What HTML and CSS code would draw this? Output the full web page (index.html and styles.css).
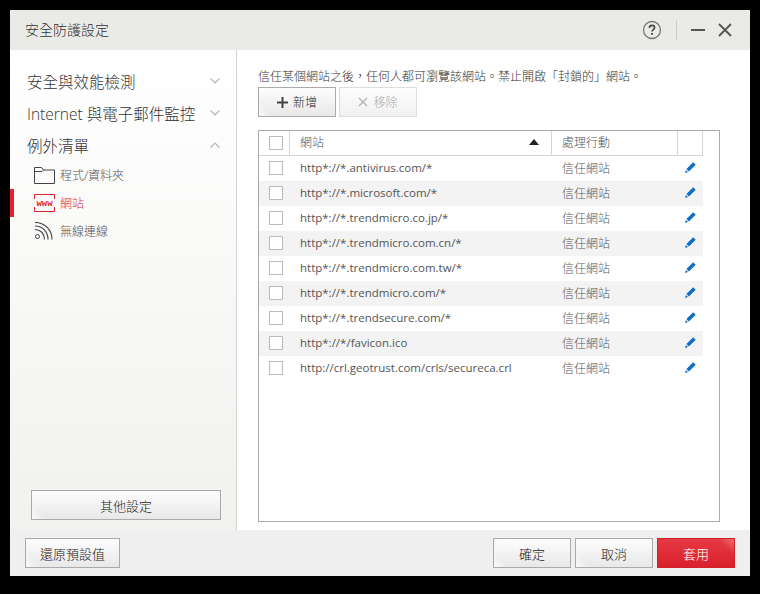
FILE: index.html
```html
<!DOCTYPE html>
<html lang="zh-Hant">
<head>
<meta charset="utf-8">
<title>安全防護設定</title>
<link rel="stylesheet" href="styles.css">
</head>
<body>
<div class="window">
  <header class="titlebar">
    <span class="title">安全防護設定</span>
    <div class="controls">
      <svg class="ic-help" width="20" height="20" viewBox="0 0 20 20"><circle cx="10" cy="10" r="8.5" fill="none" stroke="#777" stroke-width="1.3"/><path d="M7.4 8c0-1.6 1.1-2.6 2.6-2.6s2.600 1 2.600 2.300c0 1.900-2.600 1.900-2.600 3.800" fill="none" stroke="#444" stroke-width="1.6"/><rect x="9.1" y="13" width="1.8" height="1.8" fill="#444"/></svg>
      <span class="sep"></span>
      <svg class="ic-min" width="14" height="14" viewBox="0 0 14 14"><rect x="0" y="6" width="14" height="2" fill="#555"/></svg>
      <svg class="ic-close" width="14" height="14" viewBox="0 0 14 14"><path d="M1 1l12 12M13 1L1 13" stroke="#555" stroke-width="1.8" fill="none"/></svg>
    </div>
  </header>
  <div class="main">
    <aside class="sidebar">
      <nav class="nav">
        <div class="nav-head"><span>安全與效能檢測</span><svg class="chev" width="10" height="6" viewBox="0 0 10 6"><path d="M.5.5L5 5 9.500.5" fill="none" stroke="#b5b5b5" stroke-width="1.200"/></svg></div>
        <div class="nav-head"><span>Internet 與電子郵件監控</span><svg class="chev" width="10" height="6" viewBox="0 0 10 6"><path d="M.5.5L5 5 9.500.5" fill="none" stroke="#b5b5b5" stroke-width="1.200"/></svg></div>
        <div class="nav-head"><span>例外清單</span><svg class="chev" width="10" height="6" viewBox="0 0 10 6"><path d="M.5 5.500L5 1l4.500 4.500" fill="none" stroke="#b5b5b5" stroke-width="1.200"/></svg></div>
        <div class="nav-sub">
          <svg width="21" height="17" viewBox="0 0 21 17"><path d="M.5 16.500V.5h7l2 2.500h11v13.500zM.5 4.500h7.500l1.500-1.500" fill="none" stroke="#444"/></svg>
          <span>程式/資料夾</span>
        </div>
        <div class="nav-sub active">
          <svg width="21" height="18" viewBox="0 0 21 18"><path d="M.5 5V.5h20V5M.5 13v4.500h20V13" fill="none" stroke="#d9232e"/><text x="10.500" y="11.800" text-anchor="middle" class="www">www</text></svg>
          <span>網站</span>
        </div>
        <div class="nav-sub">
          <svg width="21" height="18" viewBox="0 0 21 18"><circle cx="3.500" cy="14.500" r="2" fill="none" stroke="#444"/><path d="M1 7.500c5.500 0 9.500 4 9.500 10M1 4c7.500 0 13 6 13 13.500M1 .5c10 0 17 7.500 17 17" fill="none" stroke="#444" stroke-width="1.100"/></svg>
          <span>無線連線</span>
        </div>
      </nav>
      <button class="btn btn-more">其他設定</button>
    </aside>
    <section class="content">
      <p class="desc">信任某個網站之後，任何人都可瀏覽該網站。禁止開啟「封鎖的」網站。</p>
      <div class="toolbar">
        <button class="btn btn-tool"><svg width="11" height="11" viewBox="0 0 11 11"><path d="M5.500 0v11M0 5.500h11" stroke="#444" stroke-width="2"/></svg>新增</button>
        <button class="btn btn-tool disabled"><svg width="10" height="10" viewBox="0 0 10 10"><path d="M1 1l8 8M9 1L1 9" stroke="#bbb" stroke-width="1.600"/></svg>移除</button>
      </div>
      <div class="tablebox">
        <div class="row head">
          <div class="c-check"><span class="cb"></span></div>
          <div class="c-site">網站<svg class="sort" width="10" height="6" viewBox="0 0 10 6"><path d="M0 6L5 0l5 6z" fill="#222"/></svg></div>
          <div class="c-act">處理行動</div>
          <div class="c-edit"></div>
        </div>
        <div class="row"><div class="c-check"><span class="cb"></span></div><div class="c-site">http*://*.antivirus.com/*</div><div class="c-act">信任網站</div><div class="c-edit"><svg class="pen" width="11" height="11" viewBox="0 0 11 11"><path d="M8.200.3l2.500 2.500-6.800 6.800-2.500-2.500zM1 8l2 2-3 1z" fill="#0f6fc6"/></svg></div></div>
        <div class="row"><div class="c-check"><span class="cb"></span></div><div class="c-site">http*://*.microsoft.com/*</div><div class="c-act">信任網站</div><div class="c-edit"><svg class="pen" width="11" height="11" viewBox="0 0 11 11"><path d="M8.200.3l2.500 2.500-6.800 6.800-2.500-2.500zM1 8l2 2-3 1z" fill="#0f6fc6"/></svg></div></div>
        <div class="row"><div class="c-check"><span class="cb"></span></div><div class="c-site">http*://*.trendmicro.co.jp/*</div><div class="c-act">信任網站</div><div class="c-edit"><svg class="pen" width="11" height="11" viewBox="0 0 11 11"><path d="M8.200.3l2.500 2.500-6.800 6.800-2.500-2.500zM1 8l2 2-3 1z" fill="#0f6fc6"/></svg></div></div>
        <div class="row"><div class="c-check"><span class="cb"></span></div><div class="c-site">http*://*.trendmicro.com.cn/*</div><div class="c-act">信任網站</div><div class="c-edit"><svg class="pen" width="11" height="11" viewBox="0 0 11 11"><path d="M8.200.3l2.500 2.500-6.800 6.800-2.500-2.500zM1 8l2 2-3 1z" fill="#0f6fc6"/></svg></div></div>
        <div class="row"><div class="c-check"><span class="cb"></span></div><div class="c-site">http*://*.trendmicro.com.tw/*</div><div class="c-act">信任網站</div><div class="c-edit"><svg class="pen" width="11" height="11" viewBox="0 0 11 11"><path d="M8.200.3l2.500 2.500-6.800 6.800-2.500-2.500zM1 8l2 2-3 1z" fill="#0f6fc6"/></svg></div></div>
        <div class="row"><div class="c-check"><span class="cb"></span></div><div class="c-site">http*://*.trendmicro.com/*</div><div class="c-act">信任網站</div><div class="c-edit"><svg class="pen" width="11" height="11" viewBox="0 0 11 11"><path d="M8.200.3l2.500 2.500-6.800 6.800-2.500-2.500zM1 8l2 2-3 1z" fill="#0f6fc6"/></svg></div></div>
        <div class="row"><div class="c-check"><span class="cb"></span></div><div class="c-site">http*://*.trendsecure.com/*</div><div class="c-act">信任網站</div><div class="c-edit"><svg class="pen" width="11" height="11" viewBox="0 0 11 11"><path d="M8.200.3l2.500 2.500-6.800 6.800-2.500-2.500zM1 8l2 2-3 1z" fill="#0f6fc6"/></svg></div></div>
        <div class="row"><div class="c-check"><span class="cb"></span></div><div class="c-site">http*://*/favicon.ico</div><div class="c-act">信任網站</div><div class="c-edit"><svg class="pen" width="11" height="11" viewBox="0 0 11 11"><path d="M8.200.3l2.500 2.500-6.800 6.800-2.500-2.500zM1 8l2 2-3 1z" fill="#0f6fc6"/></svg></div></div>
        <div class="row"><div class="c-check"><span class="cb"></span></div><div class="c-site">http://crl.geotrust.com/crls/secureca.crl</div><div class="c-act">信任網站</div><div class="c-edit"><svg class="pen" width="11" height="11" viewBox="0 0 11 11"><path d="M8.200.3l2.500 2.500-6.800 6.800-2.500-2.500zM1 8l2 2-3 1z" fill="#0f6fc6"/></svg></div></div>
      </div>
    </section>
  </div>
  <footer class="footer">
    <button class="btn btn-foot btn-reset">還原預設值</button>
    <div class="foot-right">
      <button class="btn btn-foot">確定</button>
      <button class="btn btn-foot">取消</button>
      <button class="btn btn-foot btn-apply">套用</button>
    </div>
  </footer>
</div>
</body>
</html>
```
FILE: styles.css
```css
* { box-sizing: border-box; }
html, body { margin: 0; height: 100%; background: #000; }
body {
  padding: 10px;
  font-family: "Open Sans", "Noto Sans CJK TC", sans-serif;
  font-weight: 300;
  color: #444;
  overflow: hidden;
}
.window {
  width: 740px;
  height: 566px;
  background: #fff;
  display: flex;
  flex-direction: column;
}
.titlebar {
  height: 40px;
  flex: none;
  background: #eaeae6;
  display: flex;
  align-items: center;
  justify-content: space-between;
  padding: 0 18px 0 15px;
}
.title { font-size: 14px; color: #333; margin-bottom: 2px; }
.controls { display: flex; align-items: center; }
.sep { width: 1px; height: 20px; background: #ccc; margin: 0 14px; }
.ic-min { margin-right: 13px; }
.main { flex: 1; display: flex; min-height: 0; }
.sidebar {
  width: 227px;
  flex: none;
  border-right: 1px solid #d2d2d2;
  background: linear-gradient(#fff, #f1f1ee);
  display: flex;
  flex-direction: column;
  justify-content: space-between;
  padding: 15px 0 10px;
}
.nav-head {
  height: 32px;
  display: flex;
  align-items: center;
  justify-content: space-between;
  padding: 0 16px 0 17px;
  font-size: 15.5px;
  color: #333;
}
.nav-sub {
  height: 28px;
  display: flex;
  align-items: center;
  gap: 5px;
  padding-left: 20px;
  font-size: 12px;
  color: #555;
  border-left: 4px solid transparent;
}
.nav-sub.active { border-left-color: #e8202e; color: #d9232e; }
.www { font: bold 9px "Liberation Mono", monospace; fill: #d9232e; }
.btn {
  font-family: "Open Sans", "Noto Sans CJK TC", sans-serif;
  font-size: 13px;
  font-weight: 300;
  color: #222;
  background:
    linear-gradient(45deg, rgba(255, 255, 255, .8) 0, rgba(255, 255, 255, 0) 10px),
    linear-gradient(#fdfdfd, #e8e8e8);
  border: 1px solid #aaa;
  padding: 0;
  display: inline-flex;
  align-items: center;
  justify-content: center;
}
.btn-more { width: 190px; height: 30px; margin-left: 21px; }
.content { flex: 1; padding: 17px 30px 8px 21px; display: flex; flex-direction: column; min-width: 0; }
.desc { margin: 0; font-size: 12px; line-height: 20px; height: 20px; color: #333; white-space: nowrap; }
.toolbar { display: flex; gap: 3px; height: 30px; margin-bottom: 13px; }
.btn-tool { width: 78px; height: 30px; font-size: 12px; gap: 5px; }
.btn-tool.disabled { color: #aaa; border-color: #ddd; background: linear-gradient(#fdfdfd, #f1f1f1); }
.tablebox { flex: 1; border: 1px solid #aaa; min-height: 0; }
.row {
  width: 444px;
  height: 25px;
  display: flex;
  align-items: center;
  font-size: 12px;
  color: #555;
}
.row:nth-child(odd):not(.head) { background: #f3f3f3; }
.row.head { border-bottom: 1px solid #d4d4d4; }
.row:not(.head) .c-site { font-size: 11.5px; font-weight: 400; }
.c-check { width: 31px; height: 100%; display: flex; align-items: center; justify-content: center; flex: none; padding: 0 0 1px 3px; }
.c-site { width: 262px; padding: 0 12px 2px 10px; flex: none; height: 100%; display: flex; align-items: center; justify-content: space-between; white-space: nowrap; }
.c-act { width: 126px; padding: 0 0 2px 10px; flex: none; height: 100%; display: flex; align-items: center; }
.c-edit { width: 25px; flex: none; height: 100%; display: flex; align-items: center; justify-content: center; }
.pen { margin-bottom: 2px; }
.head > div { border-right: 1px solid #d4d4d4; }
.cb { width: 14px; height: 14px; border: 1px solid #bbb; background: #fff; display: block; }
.footer {
  height: 46px;
  flex: none;
  background: #efefef;
  display: flex;
  align-items: center;
  justify-content: space-between;
  padding: 0 15px;
}
.foot-right { display: flex; gap: 4px; }
.btn-foot { width: 78px; height: 30px; }
.btn-reset { width: 95px; }
.btn-apply {
  background:
    linear-gradient(225deg, rgba(255, 255, 255, .25) 0, rgba(255, 255, 255, 0) 12px),
    linear-gradient(#e63a44, #d9202b);
  border-color: #d0202a;
  color: #fff;
}
```
